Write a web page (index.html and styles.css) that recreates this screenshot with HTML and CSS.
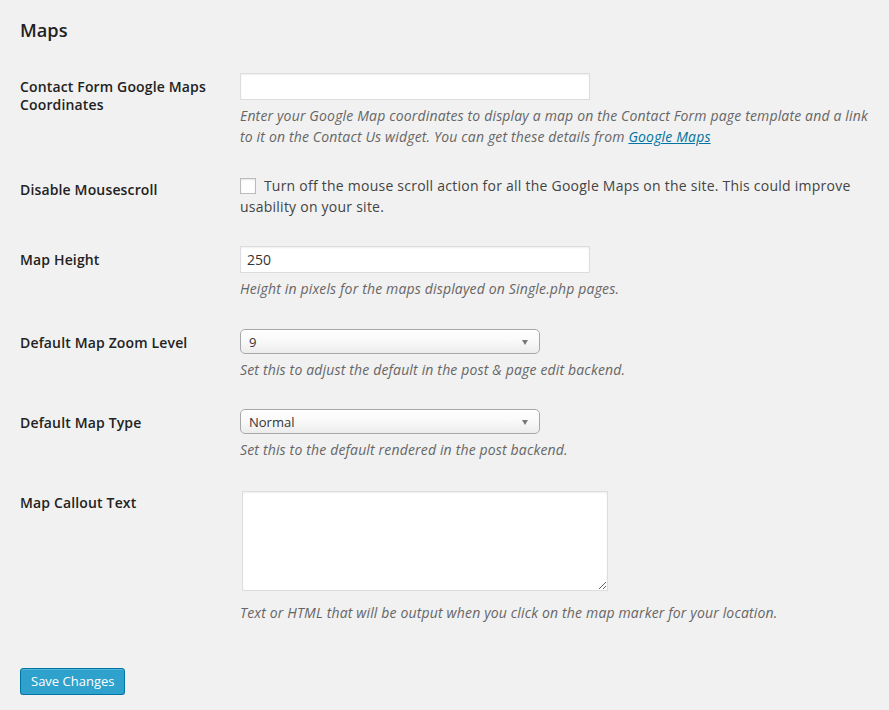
FILE: index.html
```html
<!DOCTYPE html>
<html>
<head>
<meta charset="utf-8">
<title>Maps</title>
<link rel="stylesheet" href="styles.css">
</head>
<body>
<form class="wrap">
  <h3 class="section-title">Maps</h3>
  <div class="form-table">
    <div class="row">
      <div class="label">Contact Form Google Maps Coordinates</div>
      <div class="field">
        <input class="text-input" type="text" value="">
        <p class="description">Enter your Google Map coordinates to display a map on the Contact Form page template and a link to it on the Contact Us widget. You can get these details from <a class="link" href="#">Google Maps</a></p>
      </div>
    </div>
    <div class="row">
      <div class="label">Disable Mousescroll</div>
      <div class="field field-check">
        <label class="check-label"><input class="checkbox" type="checkbox"> Turn off the mouse scroll action for all the Google Maps on the site. This could improve usability on your site.</label>
      </div>
    </div>
    <div class="row">
      <div class="label">Map Height</div>
      <div class="field field-tall">
        <input class="text-input" type="text" value="250">
        <p class="description">Height in pixels for the maps displayed on Single.php pages.</p>
      </div>
    </div>
    <div class="row">
      <div class="label">Default Map Zoom Level</div>
      <div class="field">
        <span class="select-wrap"><select class="select"><option>9</option></select></span>
        <p class="description">Set this to adjust the default in the post &amp; page edit backend.</p>
      </div>
    </div>
    <div class="row">
      <div class="label">Default Map Type</div>
      <div class="field">
        <span class="select-wrap"><select class="select"><option>Normal</option></select></span>
        <p class="description">Set this to the default rendered in the post backend.</p>
      </div>
    </div>
    <div class="row">
      <div class="label">Map Callout Text</div>
      <div class="field field-area">
        <textarea class="textarea"></textarea>
        <p class="description description-area">Text or HTML that will be output when you click on the map marker for your location.</p>
      </div>
    </div>
  </div>
  <p class="submit"><button class="button-primary" type="button">Save Changes</button></p>
</form>
</body>
</html>
```
FILE: styles.css
```css
html, body {
  margin: 0;
  padding: 0;
  background: #f1f1f1;
}
body {
  font-family: "Open Sans", "DejaVu Sans", sans-serif;
  font-size: 14px;
  color: #444;
}
.wrap {
  margin: 0;
  padding: 0 9px 0 20px;
}
.section-title {
  margin: 18px 0 0;
  font-size: 18.2px;
  line-height: 24px;
  font-weight: 600;
  color: #222;
}
.form-table {
  margin-top: 15px;
}
.row {
  display: grid;
  grid-template-columns: 220px 1fr;
}
.label {
  padding: 21px 20px 0 0;
  line-height: 18.2px;
  font-weight: 600;
  color: #222;
  letter-spacing: 0.15px;
}
.field {
  padding: 16px 0 13px;
}
.field-check {
  padding-top: 15px;
  padding-bottom: 13px;
}
.field-tall {
  padding-bottom: 14px;
}
.field-area {
  padding-bottom: 12px;
}
.text-input {
  display: block;
  box-sizing: border-box;
  width: 350px;
  height: 27px;
  margin: 0;
  padding: 3px 6px;
  border: 1px solid #ddd;
  background: #fff;
  box-shadow: inset 0 1px 2px rgba(0, 0, 0, 0.07);
  font-family: inherit;
  font-size: 14px;
  color: #333;
  outline: none;
}
.description {
  margin: 5px 0 0;
  line-height: 21px;
  font-style: italic;
  color: #666;
  letter-spacing: 0.16px;
}
.description-area {
  margin-top: 11px;
}
.link {
  color: #0074a2;
  text-decoration: underline;
}
.check-label {
  display: block;
  line-height: 21px;
  color: #444;
  letter-spacing: 0.24px;
}
.checkbox {
  -webkit-appearance: none;
  appearance: none;
  box-sizing: border-box;
  width: 16px;
  height: 16px;
  margin: -2px 4px 0 0;
  vertical-align: middle;
  border: 1px solid #bbb;
  background: #fff;
  box-shadow: inset 0 1px 2px rgba(0, 0, 0, 0.1);
}
.select-wrap {
  position: relative;
  display: block;
  width: 300px;
}
.select-wrap::after {
  content: "";
  position: absolute;
  right: 12px;
  top: 11px;
  width: 0;
  height: 0;
  border-left: 3.5px solid transparent;
  border-right: 3.5px solid transparent;
  border-top: 5px solid #7a7a7a;
  pointer-events: none;
}
.select {
  -webkit-appearance: none;
  appearance: none;
  display: block;
  box-sizing: border-box;
  width: 300px;
  height: 25px;
  margin: 0;
  padding: 0 8px;
  border: 1px solid #a8a8a8;
  border-radius: 5px;
  background: linear-gradient(#ffffff 0%, #fafafa 45%, #ececec 100%);
  font-family: inherit;
  font-size: 13px;
  color: #333;
  outline: none;
}
.textarea {
  display: block;
  box-sizing: border-box;
  width: 366px;
  height: 100px;
  margin: 2px 0 0 2px;
  padding: 2px 6px;
  border: 1px solid #ddd;
  background: #fff;
  box-shadow: inset 0 1px 2px rgba(0, 0, 0, 0.07);
  font-family: inherit;
  font-size: 14px;
  outline: none;
}
.submit {
  margin: 33px 0 0;
  padding: 0;
}
.button-primary {
  box-sizing: border-box;
  height: 27px;
  margin: 0;
  padding: 0 10px 1px;
  border: 1px solid #0074a2;
  border-radius: 3px;
  background: #2ea2cc;
  box-shadow: inset 0 1px 0 rgba(120, 200, 230, 0.5), 0 1px 0 rgba(0, 0, 0, 0.15);
  font-family: inherit;
  font-size: 13px;
  line-height: 24px;
  color: #fff;
  cursor: pointer;
}
```
